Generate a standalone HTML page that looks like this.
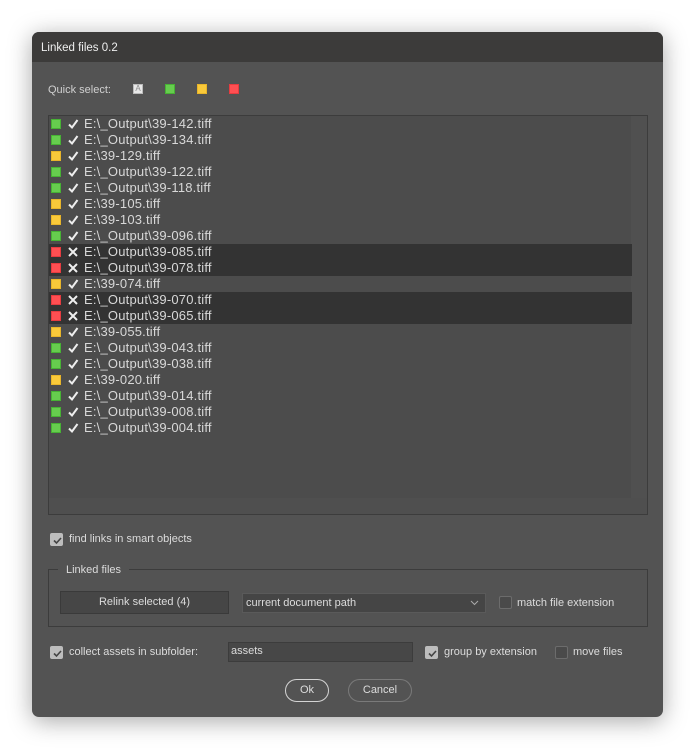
<!DOCTYPE html>
<html><head><style>
*{box-sizing:border-box;margin:0;padding:0}
body{width:696px;height:750px;background:#fff;position:relative;overflow:hidden;font-family:"Liberation Sans",sans-serif;font-size:11px;color:#dcdcdc}
.dlg{position:absolute;left:32px;top:32px;width:631px;height:685px;background:#535353;border-radius:7px;overflow:hidden;box-shadow:0 4px 24px rgba(0,0,0,.35)}
.title{position:absolute;left:0;top:0;width:100%;height:30px;background:#3c3b3a;}
.t{position:absolute;white-space:nowrap;line-height:14px}
.sq{position:absolute;width:10px;height:10px}
.g{background:#66cc4e;border:1px solid #47b234}
.y{background:#f9c93a;border:1px solid #e8b52a}
.r{background:#ff4f52;border:1px solid #e63c40}
.list{position:absolute;left:16px;top:83px;width:600px;height:400px;background:#4c4c4c;border:1px solid #3c3c3c}
.sb{position:absolute;right:0;top:0;width:16px;height:100%;background:#505050}
.hb{position:absolute;left:0;bottom:0;width:100%;height:16px;background:#4f4f4f}
.row{position:absolute;left:0;width:583px;height:16px}
.sel{background:#333}
.row .sq{left:2px;top:3px}
.row .ic{position:absolute;left:18px;top:2px;width:12px;height:12px}
.row .tx{position:absolute;left:35px;top:0px;line-height:16px;font-size:13px;letter-spacing:0.2px;color:#d8d8d8}
.cb{position:absolute;width:13px;height:13px;border:1px solid #6c6c6c;border-radius:2px;background:#4a4a4a}
.cb.on{background:#bdbdbd;border-color:#bdbdbd}
.cb.on svg{position:absolute;left:1px;top:1px}
.fs{position:absolute;left:16px;top:537px;width:600px;height:58px;border:1px solid #3c3c3c}
.btn{position:absolute;background:#464646;border:1px solid #3a3a3a;text-align:center;line-height:21px}
.pill{position:absolute;border-radius:12px;text-align:center;line-height:20px}
</style></head><body>
<div class="dlg">
<div class="title"></div>
<div class="t" style="left:9px;top:9px;color:#eee;font-size:11.5px">Linked files 0.2</div>
<div class="t" style="left:16px;top:51px;color:#d0d0d0">Quick select:</div>
<div class="sq" style="left:101px;top:52px;background:#e8e8e8;border:1px solid #bbb;font-size:8px;color:#888;line-height:8px;text-align:center">A</div>
<div class="sq g" style="left:133px;top:52px"></div>
<div class="sq y" style="left:165px;top:52px"></div>
<div class="sq r" style="left:197px;top:52px"></div>
<div class="list">
<div class="sb"></div><div class="hb"></div>
<div id="rows"></div>
</div>
<div class="cb on" style="left:18px;top:501px"><svg width="11" height="11" viewBox="0 0 11 11"><path d="M2 5.5l2.5 2.5L9 3" stroke="#444" stroke-width="1.6" fill="none"/></svg></div>
<div class="t" style="left:37px;top:500px">find links in smart objects</div>
<div class="fs"></div>
<div class="t" style="left:26px;top:531px;background:#535353;padding:0 8px">Linked files</div>
<div class="btn" style="left:28px;top:559px;width:169px;height:23px">Relink selected (4)</div>
<div class="btn" style="left:210px;top:561px;width:244px;height:20px;line-height:18px;text-align:left;padding-left:3px;border-color:#5a5a5a;background:#454545">current document path
<svg style="position:absolute;right:6px;top:6px" width="9" height="6" viewBox="0 0 9 6"><path d="M1 1l3.5 3.5L8 1" stroke="#aaa" fill="none"/></svg></div>
<div class="cb" style="left:467px;top:564px"></div>
<div class="t" style="left:485px;top:564px">match file extension</div>
<div class="cb on" style="left:18px;top:614px"><svg width="11" height="11" viewBox="0 0 11 11"><path d="M2 5.5l2.5 2.5L9 3" stroke="#444" stroke-width="1.6" fill="none"/></svg></div>
<div class="t" style="left:37px;top:613px">collect assets in subfolder:</div>
<div class="btn" style="left:196px;top:610px;width:185px;height:20px;line-height:17px;text-align:left;padding-left:2px;border-color:#3c3c3c;background:#474747">assets</div>
<div class="cb on" style="left:393px;top:614px"><svg width="11" height="11" viewBox="0 0 11 11"><path d="M2 5.5l2.5 2.5L9 3" stroke="#444" stroke-width="1.6" fill="none"/></svg></div>
<div class="t" style="left:412px;top:613px">group by extension</div>
<div class="cb" style="left:523px;top:614px"></div>
<div class="t" style="left:541px;top:613px">move files</div>
<div class="pill" style="left:253px;top:647px;width:44px;height:23px;border:1.5px solid #d4d4d4">Ok</div>
<div class="pill" style="left:316px;top:647px;width:64px;height:23px;border:1px solid #7a7a7a">Cancel</div>
</div>
<script>
var d=[["g",1,"E:\\_Output\\39-142.tiff"],["g",1,"E:\\_Output\\39-134.tiff"],["y",1,"E:\\39-129.tiff"],["g",1,"E:\\_Output\\39-122.tiff"],["g",1,"E:\\_Output\\39-118.tiff"],["y",1,"E:\\39-105.tiff"],["y",1,"E:\\39-103.tiff"],["g",1,"E:\\_Output\\39-096.tiff"],["r",0,"E:\\_Output\\39-085.tiff"],["r",0,"E:\\_Output\\39-078.tiff"],["y",1,"E:\\39-074.tiff"],["r",0,"E:\\_Output\\39-070.tiff"],["r",0,"E:\\_Output\\39-065.tiff"],["y",1,"E:\\39-055.tiff"],["g",1,"E:\\_Output\\39-043.tiff"],["g",1,"E:\\_Output\\39-038.tiff"],["y",1,"E:\\39-020.tiff"],["g",1,"E:\\_Output\\39-014.tiff"],["g",1,"E:\\_Output\\39-008.tiff"],["g",1,"E:\\_Output\\39-004.tiff"]];
var h="";d.forEach(function(r,i){
var ic=r[1]?'<path d="M2 6.5l3 3L10.5 2" stroke="#eee" stroke-width="2" fill="none"/>':'<path d="M2 2l8 8M10 2l-8 8" stroke="#eee" stroke-width="2" fill="none"/>';
h+='<div class="row'+(r[1]?'':' sel')+'" style="top:'+(i*16)+'px"><div class="sq '+r[0]+'"></div><svg class="ic" viewBox="0 0 12 12">'+ic+'</svg><div class="tx"></div></div>';});
document.getElementById("rows").innerHTML=h;
var t=document.querySelectorAll(".row .tx");d.forEach(function(r,i){t[i].textContent=r[2];});
</script>
</body></html>
